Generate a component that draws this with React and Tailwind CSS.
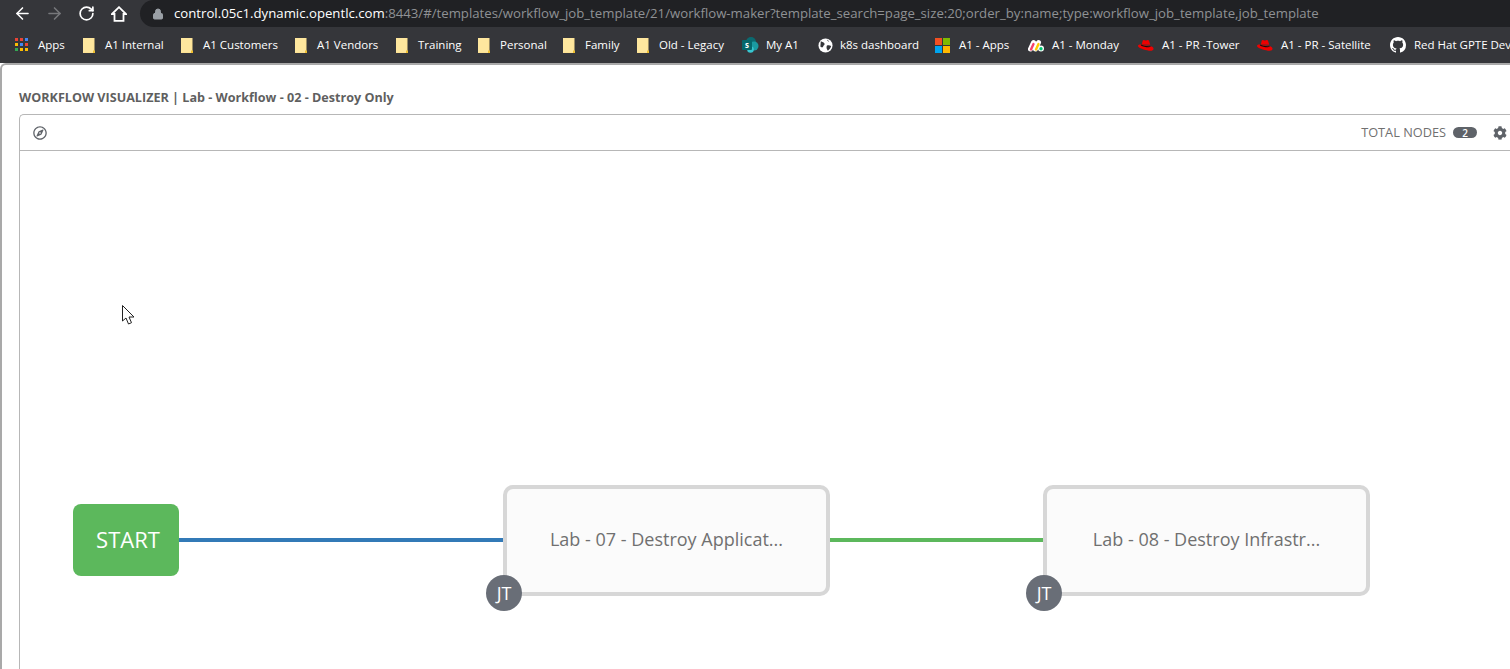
import React from "react";
import { ArrowLeft, ArrowRight, RotateCw, Lock } from "lucide-react";
import { FaCog, FaRegCompass } from "react-icons/fa";

const Folder = () => (
  <svg width="12" height="15" viewBox="0 0 12 15" className="shrink-0">
    <path d="M0 0h11.500v15H0z" fill="#fde293" />
    <path d="M0 0h10.500v14H0z" fill="#fee79e" />
    <path d="M10 12.500h2V15h-2z" fill="#f0c030" />
  </svg>
);

const AppsGrid = () => (
  <svg width="14" height="14" viewBox="0 0 14 14" className="shrink-0">
    <path d="M0 0h3v3H0z" fill="#ea4335" />
    <path d="M5 0h3v3H5z" fill="#ea4335" />
    <path d="M10 0h3v3h-3z" fill="#4285f4" />
    <path d="M0 5h3v3H0z" fill="#fbbc04" />
    <path d="M5 5h3v3H5z" fill="#4285f4" />
    <path d="M10 5h3v3h-3z" fill="#ea4335" />
    <path d="M0 10h3v3H0z" fill="#34a853" />
    <path d="M5 10h3v3H5z" fill="#fbbc04" />
    <path d="M10 10h3v3h-3z" fill="#fbbc04" />
  </svg>
);

const SharePoint = () => (
  <svg width="17" height="16" viewBox="0 0 17 16" className="shrink-0">
    <circle cx="9" cy="5" r="5" fill="#0b6a70" />
    <circle cx="12" cy="9" r="4.500" fill="#1a9ba1" />
    <circle cx="8.500" cy="12.500" r="3.300" fill="#37c6d0" />
    <rect x="0" y="3" width="10" height="10" rx="1" fill="#05676b" />
    <text x="5" y="11" fontSize="8" fontWeight="700" fill="#fff" textAnchor="middle" fontFamily="Open Sans">s</text>
  </svg>
);

const Globe = () => (
  <svg width="15" height="15" viewBox="0 0 16 16" className="shrink-0">
    <circle cx="8" cy="8" r="7.500" fill="#fff" />
    <path d="M3 3.500c1.500 1 3.500 1 4 2.500s-1.500 1.500-1.500 3-2 1-3 0M10 1.500c-.5 1.500 1 2 2 2.500M9.500 8c1.500-.5 3-.5 4.500.5-.5 2-2 4-3.500 5-1-1.500-2-3-1-5.500z" fill="#35363a" />
  </svg>
);

const Microsoft = () => (
  <svg width="15" height="15" viewBox="0 0 15 15" className="shrink-0">
    <path d="M0 0h7v7H0z" fill="#f25022" />
    <path d="M8 0h7v7H8z" fill="#7fba00" />
    <path d="M0 8h7v7H0z" fill="#00a4ef" />
    <path d="M8 8h7v7H8z" fill="#ffb900" />
  </svg>
);

const Monday = () => (
  <svg width="16" height="13" viewBox="0 0 16 13" className="shrink-0">
    <path d="M2.500 10 5.500 3.500M7.500 10 10.500 3.500" stroke="#fff" strokeWidth="5" strokeLinecap="round" />
    <circle cx="13" cy="9.500" r="3" fill="#fff" />
    <path d="M3 10.500 5.500 5" stroke="#f6416c" strokeWidth="2.400" strokeLinecap="round" />
    <path d="M8 10.500 10.500 5" stroke="#ffcb00" strokeWidth="2.400" strokeLinecap="round" />
    <circle cx="13" cy="9.800" r="1.700" fill="#00ca72" />
  </svg>
);

const RedHat = () => (
  <svg width="16" height="13" viewBox="0 0 17 13" className="shrink-0">
    <path d="M4 5.500 5 1.500C5.300.5 6 .5 7 1c1 .4 1.500.4 2.500 0 1.200-.5 2-.3 2.300.8l1.200 4z" fill="#e00" />
    <path d="M0 6.800c0-1 1.500-1.300 3-1.300l10 1.500c2 .4 3.500 1.500 3.500 3 0 2-2.500 2.500-5 2-4-.8-11.500-2.500-11.500-5.200z" fill="#e00" />
    <path d="M3.500 5.500c2.500 1.500 6.500 2 9.700 1.700l.3 1c-3.500.5-8-.3-10.500-1.800z" fill="#111" />
  </svg>
);

const GitHub = () => (
  <svg width="16" height="16" viewBox="0 0 16 16" className="shrink-0">
    <path
      fill="#fff"
      d="M8 0C3.580 0 0 3.580 0 8c0 3.540 2.290 6.530 5.470 7.590.4.070.55-.17.55-.38 0-.19-.01-.82-.01-1.490-2.010.37-2.530-.49-2.690-.94-.09-.23-.48-.94-.82-1.130-.28-.15-.68-.52-.01-.53.630-.01 1.080.58 1.230.82.720 1.210 1.870.87 2.330.66.070-.52.280-.87.510-1.070-1.780-.2-3.640-.89-3.640-3.950 0-.87.310-1.590.82-2.150-.08-.2-.36-1.020.08-2.120 0 0 .67-.21 2.200.82.640-.18 1.320-.27 2-.27s1.360.09 2 .27c1.530-1.040 2.200-.82 2.200-.82.440 1.100.16 1.920.08 2.120.51.560.82 1.270.82 2.150 0 3.070-1.870 3.750-3.650 3.950.29.250.54.730.54 1.480 0 1.070-.01 1.930-.01 2.200 0 .21.150.46.55.38A8.010 8.010 0 0 0 16 8c0-4.420-3.580-8-8-8z"
    />
  </svg>
);

const HomeIcon = () => (
  <svg width="16" height="16" viewBox="0 0 16 16" className="shrink-0 ml-[3px]">
    <path d="M1 8 8 1.200 15 8h-2.500v6.800h-9V8z" fill="none" stroke="#fff" strokeWidth="1.800" strokeLinejoin="miter" />
  </svg>
);

const bookmarks = [
  { icon: <AppsGrid />, label: "Apps", gap: "gap-[9px]", w: "w-[68px]" },
  { icon: <Folder />, label: "A1 Internal", gap: "gap-[10px]", w: "w-[98px]" },
  { icon: <Folder />, label: "A1 Customers", gap: "gap-[10px]", w: "w-[114px]" },
  { icon: <Folder />, label: "A1 Vendors", gap: "gap-[10px]", w: "w-[101px]" },
  { icon: <Folder />, label: "Training", gap: "gap-[10px]", w: "w-[82px]" },
  { icon: <Folder />, label: "Personal", gap: "gap-[10px]", w: "w-[85px]" },
  { icon: <Folder />, label: "Family", gap: "gap-[10px]", w: "w-[74px]" },
  { icon: <Folder />, label: "Old - Legacy", gap: "gap-[10px]", w: "w-[105px]" },
  { icon: <SharePoint />, label: "My A1", gap: "gap-[7px]", w: "w-[76px]" },
  { icon: <Globe />, label: "k8s dashboard", gap: "gap-[7px]", w: "w-[117px]" },
  { icon: <Microsoft />, label: "A1 - Apps", gap: "gap-[9px]", w: "w-[93px]" },
  { icon: <Monday />, label: "A1 - Monday", gap: "gap-[8px]", w: "w-[110px]" },
  { icon: <RedHat />, label: "A1 - PR -Tower", gap: "gap-[8px]", w: "w-[119px]" },
  { icon: <RedHat />, label: "A1 - PR - Satellite", gap: "gap-[8px]", w: "w-[133px]" },
  { icon: <GitHub />, label: "Red Hat GPTE Dev", gap: "gap-[8px]", w: "w-[130px]" },
];

const WorkflowNode = ({ label, className }) => (
  <div
    className={`absolute top-[334px] w-[327px] h-[111px] flex items-center justify-center pb-[2px] border-4 border-[#d7d7d7] rounded-[10px] bg-[#fbfbfb] text-[18px] text-[#707070] ${className}`}
  >
    {label}
    <div className="absolute left-[-21px] top-[86px] w-9 h-9 flex items-center justify-center rounded-full bg-[#696e77] text-[18px] text-white">
      JT
    </div>
  </div>
);

const App = () => {
  return (
    <div className="w-[1510px] h-[669px] overflow-hidden flex flex-col bg-white font-['Open_Sans',sans-serif]">
      {/* browser chrome */}
      <div className="h-[27px] shrink-0 flex items-center bg-[#35363a]">
        <div className="w-[140px] shrink-0 flex items-center pl-[13px] gap-[13px]">
          <ArrowLeft size={19} color="#fff" strokeWidth={2} />
          <ArrowRight size={19} color="#77787b" strokeWidth={2} />
          <RotateCw size={17} color="#fff" strokeWidth={2.400} className="ml-px" />
          <HomeIcon />
        </div>
        <div className="flex-1 h-full flex items-center rounded-l-[14px] bg-[#202124] pl-[12px] text-[13.200px] whitespace-nowrap">
          <Lock size={12} color="#9aa0a6" fill="#9aa0a6" className="mr-[10px]" />
          <span className="text-white">control.05c1.dynamic.opentlc.com</span>
          <span className="text-[#8f9194]">
            :8443/#/templates/workflow_job_template/21/workflow-maker?template_search=page_size:20;order_by:name;type:workflow_job_template,job_template
          </span>
        </div>
      </div>
      <div className="h-9 shrink-0 flex items-center pl-[15px] bg-[#35363a] whitespace-nowrap overflow-hidden">
        {bookmarks.map((b) => (
          <div key={b.label} className={`${b.w} shrink-0 flex items-center ${b.gap} text-[11.500px] text-white`}>
            {b.icon}
            <span>{b.label}</span>
          </div>
        ))}
      </div>

      {/* page */}
      <div className="flex-1 min-h-0 border-t-2 border-l-2 border-[#a9a9a9] rounded-tl-[6px] pl-[17px] pt-[25px] flex flex-col">
        <h1 className="h-[17px] shrink-0 flex items-center text-[12.600px] font-bold text-[#5f5f5f] whitespace-nowrap">
          WORKFLOW VISUALIZER | Lab - Workflow - 02 - Destroy Only
        </h1>
        <div className="mt-[7px] flex-1 min-h-0 w-[1510px] flex flex-col border-t border-l border-[#b7b7b7] rounded-tl-[5px]">
          <div className="h-[36px] shrink-0 flex items-center pr-[22px] border-b border-[#b7b7b7]">
            <FaRegCompass size={14} color="#5f6369" className="ml-[13px] mt-px" />
            <span className="ml-auto mr-[7px] text-[12.750px] text-[#707070]">TOTAL NODES</span>
            <span className="w-6 h-[11px] flex items-center justify-center rounded-full bg-[#5f6369] text-[10px] leading-none font-semibold text-white">2</span>
            <FaCog size={14} color="#5f6369" className="ml-[16px] shrink-0" />
          </div>

          {/* free canvas of workflow nodes */}
          <div className="relative flex-1 overflow-hidden">
            <svg width="13" height="21" viewBox="0 0 13 21" className="absolute left-[102px] top-[154px]">
              <path d="M.5.500v15.500l3.500-3 2.500 6 3-1.300-2.500-5.700h5z" fill="#fff" stroke="#222" strokeWidth="1" />
            </svg>
            <div className="absolute left-[53px] top-[353px] w-[106px] h-[72px] flex items-center justify-center pl-1 pb-[2px] rounded-[8px] bg-[#5cb85c] text-[22px] text-white">
              START
            </div>
            <div className="absolute left-[159px] top-[387px] w-[324px] h-1 bg-[#337ab7]" />
            <div className="absolute left-[810px] top-[387px] w-[213px] h-1 bg-[#5cb85c]" />
            <WorkflowNode label="Lab - 07 - Destroy Applicat..." className="left-[483px]" />
            <WorkflowNode label="Lab - 08 - Destroy Infrastr..." className="left-[1023px]" />
          </div>
        </div>
      </div>
    </div>
  );
};

export default App;
